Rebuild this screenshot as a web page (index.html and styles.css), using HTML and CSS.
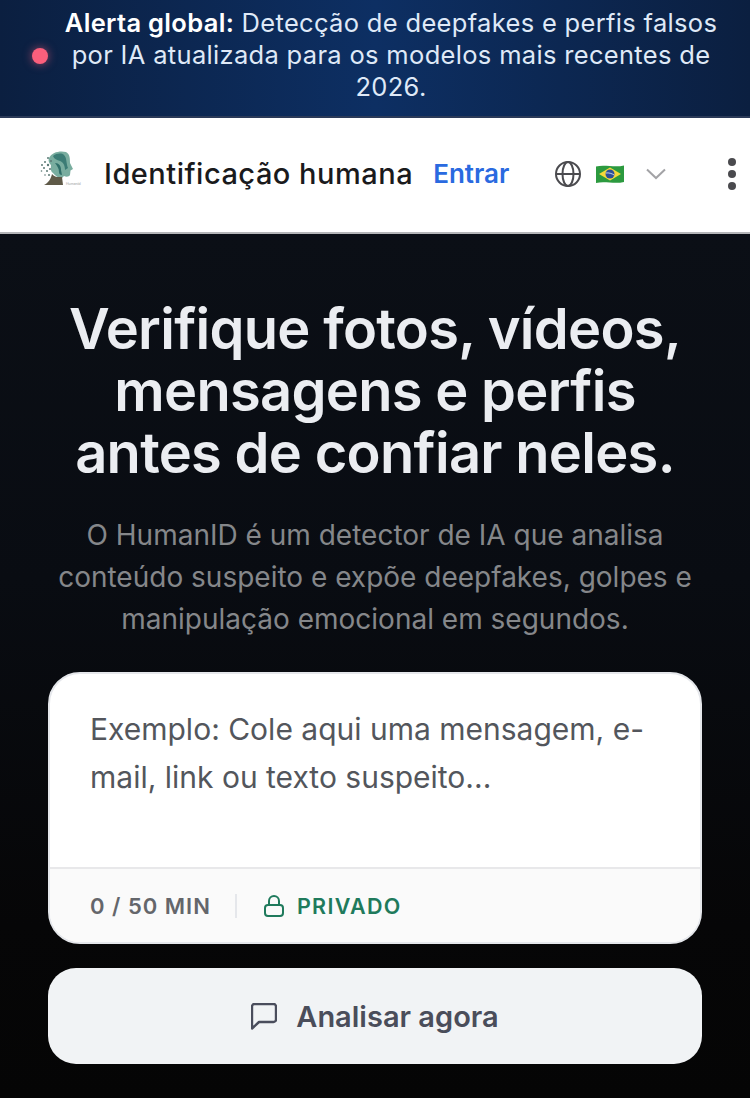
FILE: index.html
```html
<!DOCTYPE html>
<html lang="pt-BR">
<head>
<meta charset="utf-8">
<title>HumanID</title>
<link rel="stylesheet" href="styles.css">
</head>
<body>
<div class="alert">
  <span class="alert-dot"></span>
  <p class="alert-text"><strong>Alerta global:</strong> Detecção de deepfakes e perfis falsos por IA atualizada para os modelos mais recentes de 2026.</p>
</div>
<header class="nav">
  <svg class="logo" viewBox="0 0 44 38" width="44" height="38">
    <path d="M9 7C12 1 20-.5 26 1c4 2 4 7 4 11l3 6-2.500 1.500L30 24c-1 2-4 2-6 1l-2 2c-3 0-7-2-9-5-3-2-2-5-2-8-2-2-3-4-2-7z" fill="#79ad9f"/>
    <path d="M13 5c4-3 9-3 11-1 3 3 2 8 4 13l-3 2c0-5-2-8-5-9-3-1-6-2-7-5z" fill="#3b7c75"/>
    <path d="M15 12c4 0 6 3 6 7l1 5c-2 0-3-1-3-3 0-4-2-6-4-9z" fill="#2f6f69"/>
    <path d="M12 23c3 4 7 3 10 3l1 8H4c4-2 7-6 8-11z" fill="#5f5a48"/>
    <g fill="#5d7a76"><circle cx="2" cy="14" r="1"/><circle cx="5" cy="11" r="1"/><circle cx="8" cy="7" r="1"/><circle cx="4" cy="17" r="1"/><circle cx="8" cy="14" r="1.200"/><circle cx="1.500" cy="20" r=".8"/><circle cx="7" cy="20" r="1"/><circle cx="10" cy="18" r="1"/><circle cx="5" cy="24" r=".8"/><circle cx="11" cy="10" r="1"/><circle cx="9" cy="24" r="1"/></g>
    <text x="26" y="34" class="logo-mark">Humanid</text>
  </svg>
  <span class="brand">Identificação humana</span>
  <a class="login">Entrar</a>
  <div class="lang">
    <svg class="globe" viewBox="0 0 26 26" width="26" height="26" fill="none" stroke="#4b4b4f" stroke-width="2"><circle cx="13" cy="13" r="12"/><path d="M1 13h24"/><ellipse cx="13" cy="13" rx="5.500" ry="12"/></svg>
    <svg class="flag" viewBox="0 0 28 20" width="28" height="20"><path d="M0 2.500c9-2.500 18 1.500 28-1v16.500c-10 2.500-19-1.500-28 1z" fill="#2c9a3f"/><path d="M14 3.500 25 10 14 16.500 3 10z" fill="#f5d93a"/><circle cx="14" cy="10" r="4.500" fill="#2d4f9a"/><path d="M9.800 9c3-.5 6 .5 8.400 2" stroke="#e8eef5" stroke-width=".8" fill="none"/></svg>
    <svg class="chev" viewBox="0 0 20 12" width="20" height="12" fill="none" stroke="#a3a3a6" stroke-width="2"><path d="M1 1.500l9 8.500 9-8.500"/></svg>
  </div>
  <div class="kebab"><i></i><i></i><i></i></div>
</header>
<main class="hero">
  <h1>Verifique fotos, vídeos, mensagens e perfis antes de confiar neles.</h1>
  <p class="lead">O HumanID é um detector de IA que analisa conteúdo suspeito e expõe deepfakes, golpes e manipulação emocional em segundos.</p>
  <section class="card">
    <div class="placeholder">Exemplo: Cole aqui uma mensagem, e-mail, link ou texto suspeito...</div>
    <div class="card-foot">
      <span class="count">0 / 50 MIN</span>
      <span class="sep"></span>
      <svg class="lock" viewBox="0 0 20 22" width="20" height="22" fill="none" stroke="#1f7a5c" stroke-width="2"><rect x="1" y="10" width="18" height="11" rx="3"/><path d="M5 10V6a5 5 0 0 1 10 0v4"/></svg>
      <span class="private">PRIVADO</span>
    </div>
  </section>
  <button class="analyze">
    <svg viewBox="1 1 26 27" width="26" height="27" fill="none" stroke="#4a4d5c" stroke-width="2.400" stroke-linejoin="round"><path d="M2 4.500A2.500 2.500 0 0 1 4.500 2h19A2.500 2.500 0 0 1 26 4.500v13a2.500 2.500 0 0 1-2.500 2.500H9l-7 6.500z"/></svg>
    <span>Analisar agora</span>
  </button>
</main>
</body>
</html>
```
FILE: styles.css
```css
* { box-sizing: border-box; }
html, body { margin: 0; height: 100%; }
body { font-family: "Inter", sans-serif; background: #050505; overflow: hidden; }
.alert {
  height: 118px;
  background: linear-gradient(90deg, #0b1f40 0%, #0d2f63 50%, #0b1f40 100%);
  border-bottom: 2px solid #2b3a58;
  display: flex;
  align-items: center;
  padding: 0 30px 6px 32px;
  gap: 14px;
}
.alert-dot {
  flex: none;
  width: 16px; height: 16px;
  margin-top: 2px;
  border-radius: 50%;
  background: #fb5f7c;
  box-shadow: 0 0 10px rgba(251, 95, 124, .6);
}
.alert-text {
  margin: 0;
  flex: 1;
  text-align: center;
  font-size: 25.500px;
  line-height: 32px;
  letter-spacing: .32px;
  color: #dfe9f7;
}
.alert-text strong { color: #fff; font-weight: 600; }
.nav {
  height: 116px;
  background: #fff;
  border-bottom: 2px solid #b4b5b8;
  display: flex;
  align-items: center;
  padding: 0 0 4px 40px;
}
.logo { flex: none; margin-right: 20px; margin-bottom: 7px; }
.logo-mark { font-family: "Inter", sans-serif; font-size: 3.500px; fill: #9a9a9a; }
.brand {
  font-family: "Inter", sans-serif;
  font-size: 29px;
  font-weight: 500;
  color: #1a1a1c;
  letter-spacing: .5px;
  white-space: nowrap;
}
.login {
  margin-left: 20px;
  font-size: 26px;
  font-weight: 600;
  color: #2a6ae0;
}
.lang { display: flex; align-items: center; margin-left: 46px; margin-top: 2px; }
.globe { margin-right: 15px; }
.chev { margin-left: 22px; }
.kebab { display: flex; flex-direction: column; gap: 4px; margin-left: 62px; margin-top: 2px; }
.kebab i { width: 8px; height: 8px; border-radius: 50%; background: #4a4a4e; }
.hero {
  height: 864px;
  background: linear-gradient(180deg, #0b0f16 0%, #090c12 40%, #060607 80%, #050505 100%);
  padding: 64px 48px 0;
  text-align: center;
}
h1 {
  margin: 0 -10px;
  font-size: 56px;
  line-height: 62px;
  font-weight: 600;
  letter-spacing: -.7px;
  color: #ebedf1;
}
.lead {
  margin: 30px -10px 0;
  font-size: 28px;
  line-height: 42px;
  color: #85878a;
}
.card {
  margin-top: 32px;
  height: 272px;
  background: #fff;
  border: 2px solid #e5e7eb;
  border-radius: 32px;
  overflow: hidden;
  display: flex;
  flex-direction: column;
  text-align: left;
}
.placeholder {
  flex: 1;
  padding: 31px 40px 0;
  font-size: 30px;
  line-height: 48px;
  color: #53565c;
}
.card-foot {
  height: 75px;
  background: #fafafa;
  border-top: 2px solid #e8e8ea;
  display: flex;
  align-items: center;
  padding: 0 40px;
}
.count { font-size: 22px; font-weight: 600; letter-spacing: 1px; color: #64666b; }
.sep { width: 2px; height: 24px; background: #e5e7eb; margin: 0 27px 0 24px; }
.lock { margin-right: 13px; margin-top: 1px; }
.private { font-size: 21.500px; font-weight: 600; letter-spacing: 1.300px; color: #1f7a5c; }
.analyze {
  display: flex;
  align-items: center;
  justify-content: center;
  gap: 19px;
  width: 100%;
  height: 96px;
  margin-top: 24px;
  border: 0;
  border-radius: 28px;
  background: #f1f3f5;
  font-family: "Inter", sans-serif;
  font-size: 29px;
  font-weight: 600;
  color: #4a4d5a;
}
```
